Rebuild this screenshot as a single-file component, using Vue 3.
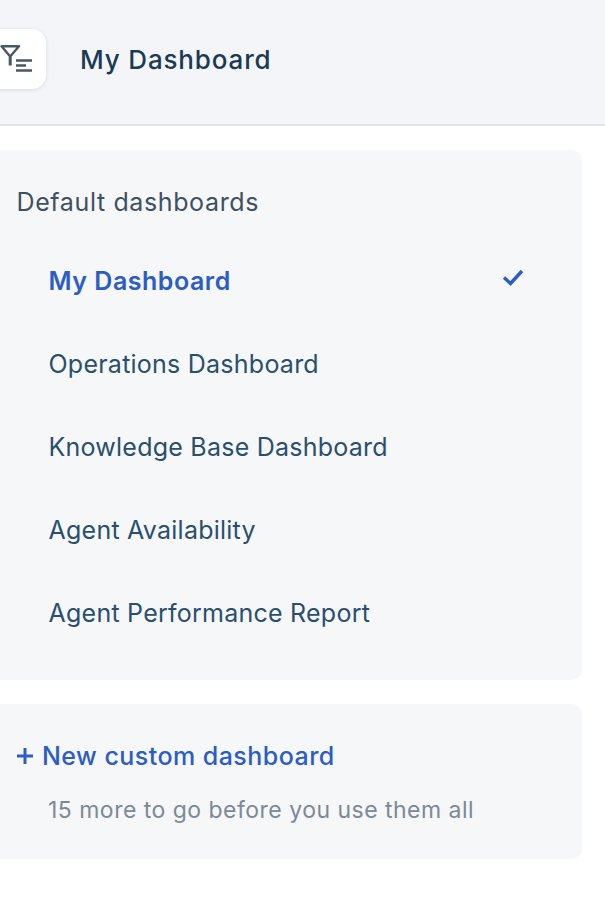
<script setup>
const items = ['Operations Dashboard', 'Knowledge Base Dashboard', 'Agent Availability', 'Agent Performance Report']
</script>

<template>
  <div class="page">
    <header class="header">
      <button class="filter" aria-label="Filter">
        <svg class="filter-icon" width="34" height="28" viewBox="0 0 34 28" fill="none">
          <path d="M2.500 1.300H20L11.200 11.500Z" stroke="#475867" stroke-width="2.400" stroke-linejoin="round" />
          <path d="M11.200 11.500V20.500" stroke="#475867" stroke-width="3" />
          <path d="M17 15.500H33M17 20.500H27M17 25.500H33" stroke="#475867" stroke-width="2.600" />
        </svg>
      </button>
      <h1 class="title">My Dashboard</h1>
    </header>

    <section class="panel list-panel">
      <h2 class="heading">Default dashboards</h2>
      <ul class="list">
        <li class="item active">
          <span>My Dashboard</span>
          <svg class="check" width="22" height="18" viewBox="0 0 22 18" fill="none">
            <path d="M2 8.500l6.500 6L20 2" stroke="#2c5cc5" stroke-width="3.400" />
          </svg>
        </li>
        <li v-for="item in items" :key="item" class="item">{{ item }}</li>
      </ul>
    </section>

    <section class="panel new-panel">
      <div class="new-link">
        <svg class="plus" width="18" height="18" viewBox="0 0 18 18" fill="none">
          <path d="M9 1v16M1 9h16" stroke="#2c5cc5" stroke-width="3" />
        </svg>
        <span>New custom dashboard</span>
      </div>
      <p class="hint">15 more to go before you use them all</p>
    </section>
  </div>
</template>

<style>
html, body { margin: 0; background: #fff; overflow: hidden; }
</style>

<style scoped>
.page {
  width: 605px;
  height: 899px;
  overflow: hidden;
  font-family: Inter, "Noto Sans", sans-serif;
  background: #fff;
}
.header {
  height: 124px;
  background: #f3f5f8;
  border-bottom: 2px solid #dfe4ec;
  display: flex;
  align-items: center;
  gap: 34px;
}
.filter {
  width: 66px;
  height: 60px;
  margin-left: -20px;
  margin-top: -6px;
  border: none;
  border-radius: 14px;
  background: #fff;
  box-shadow: 0 1px 4px rgba(24, 50, 71, 0.12);
  display: flex;
  align-items: center;
  justify-content: flex-end;
  padding: 0 13px 0 0;
  box-sizing: border-box;
}
.title {
  margin: -6px 0 0;
  font-size: 26px;
  font-weight: 500;
  letter-spacing: 0.84px;
  color: #1b3a54;
}
.panel {
  width: 594px;
  margin-left: -12px;
  background: #f5f7f9;
  border-radius: 10px;
  box-sizing: border-box;
}
.list-panel {
  height: 530px;
  margin-top: 24px;
  padding: 36px 0 0 28.500px;
}
.heading {
  margin: 0;
  font-size: 25px;
  font-weight: 400;
  letter-spacing: 0.62px;
  line-height: 32px;
  color: #3f5060;
}
.list {
  list-style: none;
  margin: 21px 0 0;
  padding: 0 58px 0 32px;
}
.item {
  height: 83px;
  display: flex;
  align-items: center;
  justify-content: space-between;
  font-size: 25px;
  letter-spacing: 0.24px;
  color: #2a4f6e;
}
.item.active {
  font-weight: 600;
  letter-spacing: 0.52px;
  color: #2c5cc5;
}
.check {
  margin-bottom: 6px;
}
.new-panel {
  height: 155px;
  margin-top: 24px;
  padding: 36px 0 0 28px;
}
.new-link {
  display: flex;
  align-items: center;
  gap: 8px;
  font-size: 25px;
  font-weight: 500;
  letter-spacing: 0.46px;
  line-height: 32px;
  color: #2c5cc5;
}
.hint {
  margin: 22px 0 0 32px;
  font-size: 23px;
  letter-spacing: 0.48px;
  line-height: 32px;
  color: #7b8a96;
}
</style>
